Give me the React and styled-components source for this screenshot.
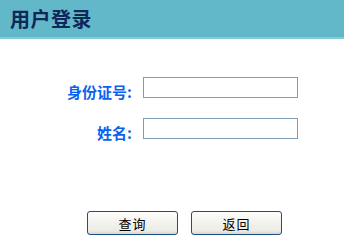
import React from 'react';
import styled, { createGlobalStyle } from 'styled-components';

const GlobalStyle = createGlobalStyle`
  html, body {
    margin: 0;
    padding: 0;
    background: #fff;
    font-family: "Noto Sans CJK SC", "Liberation Sans", sans-serif;
  }
`;

const Page = styled.div`
  width: 344px;
  height: 248px;
  overflow: hidden;
  display: flex;
  flex-direction: column;
`;

const Header = styled.div`
  height: 37px;
  background: #62b8c8;
  border-bottom: 2px solid #84cdd8;
  display: flex;
  align-items: center;
  padding-left: 10px;
`;

const Title = styled.h1`
  margin: 0;
  font-size: 20px;
  font-weight: bold;
  color: #10275a;
  letter-spacing: 0.5px;
`;

const Form = styled.div`
  display: grid;
  grid-template-columns: 132px 155px;
  grid-auto-rows: 21px;
  column-gap: 11px;
  row-gap: 20px;
  margin-top: 38px;
`;

const Label = styled.label`
  text-align: right;
  color: #0a62f2;
  font-size: 15px;
  font-weight: bold;
  line-height: 21px;
  position: relative;
  top: 4px;
`;

const Input = styled.input`
  box-sizing: border-box;
  width: 155px;
  height: 21px;
  border: 1px solid #7f9db9;
  padding: 1px 3px;
  margin: 0;
  font-size: 12px;
  outline: none;
`;

const Buttons = styled.div`
  display: flex;
  gap: 13px;
  margin-top: 72px;
  padding-left: 87px;
`;

const Button = styled.button`
  box-sizing: border-box;
  width: 91px;
  height: 24px;
  border: 1px solid #1c4f86;
  border-radius: 3px;
  background: linear-gradient(#fdfdfb, #ecebe5 85%, #d8d5cb);
  color: #000;
  font-family: "Noto Sans CJK SC", sans-serif;
  font-size: 13px;
  padding: 0;
  letter-spacing: 1px;
`;

export default function App() {
  return (
    <>
      <GlobalStyle />
      <Page>
        <Header>
          <Title>用户登录</Title>
        </Header>
        <Form>
          <Label>身份证号:</Label>
          <Input type="text" />
          <Label>姓名:</Label>
          <Input type="text" />
        </Form>
        <Buttons>
          <Button>查询</Button>
          <Button>返回</Button>
        </Buttons>
      </Page>
    </>
  );
}
